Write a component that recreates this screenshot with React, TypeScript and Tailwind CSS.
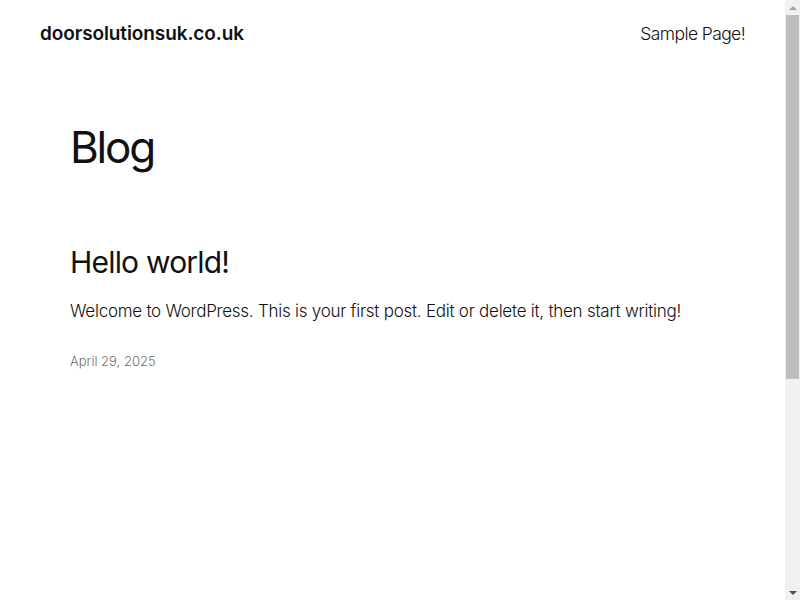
export default function App() {
  return (
    <div className="flex h-[600px] bg-white text-[#111111]" style={{ fontFamily: 'Inter, "Noto Sans", sans-serif' }}>
      <div className="flex-1 overflow-hidden">
        {/* Header */}
        <header className="flex h-[68px] items-center justify-between px-10">
          <a className="text-[19px] font-semibold tracking-[-0.1px]">doorsolutionsuk.co.uk</a>
          <nav>
            <a className="text-[17.5px] font-light tracking-[-0.6px]">Sample Page!</a>
          </nav>
        </header>

        {/* Main */}
        <main className="px-[70px]">
          <h1 className="mt-[53px] text-[44px] font-normal leading-[1.2] tracking-[-2.2px]">Blog</h1>

          <article className="mt-[69px]">
            <h2 className="text-[30px] font-normal leading-[1.3] tracking-[-0.8px]">Hello world!</h2>
            <p className="mt-[16px] text-[17px] font-light leading-[1.6] tracking-[-0.25px]">
              Welcome to WordPress. This is your first post. Edit or delete it, then start writing!
            </p>
            <p className="mt-[27px] text-[13px] font-light text-[#707070]">April 29, 2025</p>
          </article>
        </main>
      </div>

      {/* Scrollbar */}
      <div className="flex w-[15px] flex-col items-center bg-[#f1f1f1]">
        <div className="flex h-[15px] items-center justify-center">
          <div className="h-0 w-0 border-x-[4px] border-b-[4px] border-x-transparent border-b-[#a3a3a3]" />
        </div>
        <div className="h-[364px] w-[13px] bg-[#bdbdbd]" />
        <div className="flex-1" />
        <div className="flex h-[15px] items-center justify-center">
          <div className="h-0 w-0 border-x-[4px] border-t-[4px] border-x-transparent border-t-[#505050]" />
        </div>
      </div>
    </div>
  )
}
